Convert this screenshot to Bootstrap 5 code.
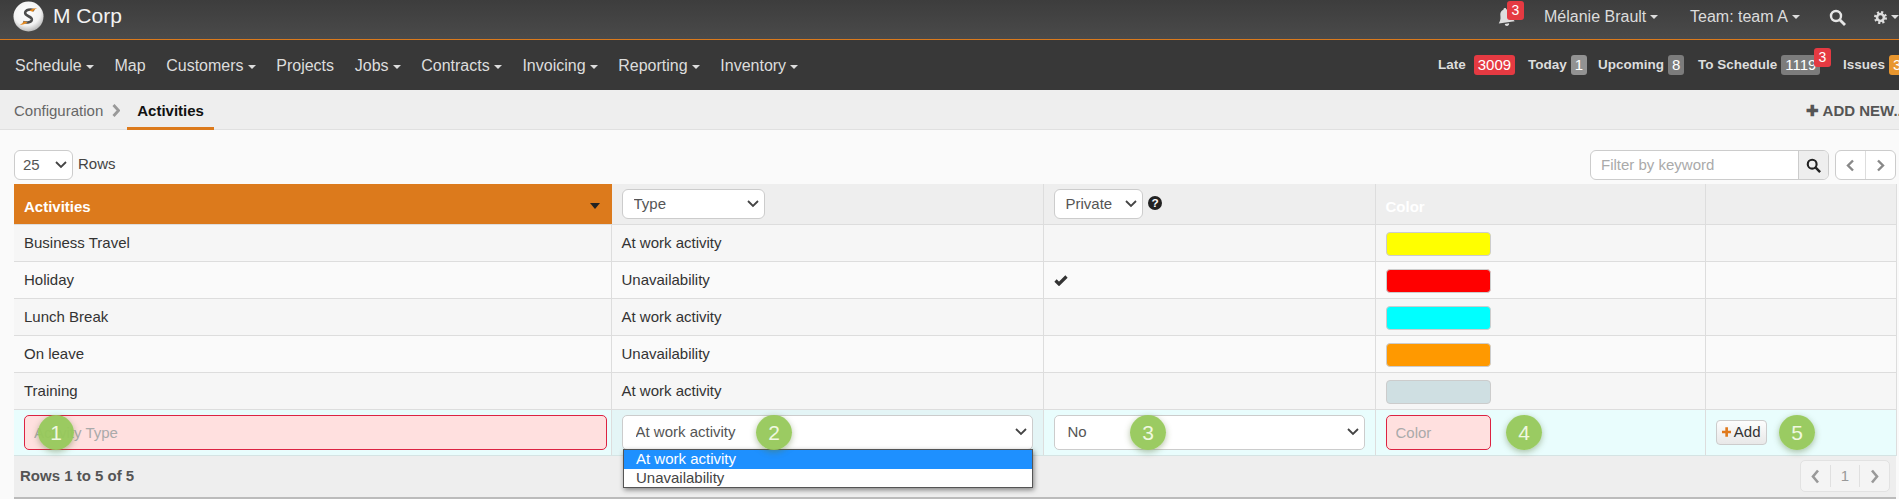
<!DOCTYPE html>
<html lang="en">
<head>
<meta charset="utf-8">
<title>Activities</title>
<link href="https://cdn.jsdelivr.net/npm/bootstrap@5.3.0/dist/css/bootstrap.min.css" rel="stylesheet">
<style>
html,body{height:499px;overflow:hidden}
body{font-family:"Liberation Sans",Arial,sans-serif;font-size:15px;color:#333;background:#fafafa;position:relative}
.top-bar{height:40px;background:linear-gradient(#3d3d3d,#4a4a4a);border-bottom:1px solid #dc7a1c;color:#ddd;white-space:nowrap;overflow:hidden}
.brand{font-size:21px;color:#f2f2f2;margin-left:13px;gap:9px;align-self:flex-start}
.logo{width:31px;height:31px;flex:none;margin-top:1px}
.top-right{margin-left:auto;align-self:stretch;flex:none}
.top-item{font-size:16px;color:#dcdcdc;flex:none;display:flex;align-items:center;padding-bottom:6px;position:relative}
.w-bell{width:47px}.w-user{width:146px}.w-team{width:139px}.w-search{width:45px;padding-bottom:4px}.w-gear{width:25px;padding-bottom:5px}
.bell-i{transform:rotate(-8deg)}
.bell-tip{left:10px;top:1px}
.caret-d{display:inline-block;width:0;height:0;border-left:4px solid transparent;border-right:4px solid transparent;border-top:4px solid currentColor;vertical-align:middle;margin-left:4px}
.main-bar{height:50px;background:#383838;color:#ddd;white-space:nowrap;overflow:hidden;padding-left:15px}
.menu{gap:20.7px;font-size:16px;padding-top:2px}
.stats{margin-left:auto;font-size:13.5px;font-weight:700;color:#ddd;align-self:stretch;flex:none}
.stat{display:flex;align-items:center;gap:4px;flex:none;position:relative}
.w-late{width:90px}.w-today{width:70px}.w-upcoming{width:100px}.w-sched{width:145px}.w-issues{width:56px}
.count{display:inline-block;height:20px;line-height:20px;padding:0 4px;font-size:15px;font-weight:400;border-radius:3px;color:#fff;background:#7c7c7c;text-align:center;flex:none}
.count-red{background:#e53a42}
.count-light{background:#929292}
.count-orange{background:#e8962e}
.tip{position:absolute;width:17px;height:19px;line-height:19px;background:#e53a42;color:#fff;border-radius:3px;font-size:14px;font-weight:400;text-align:center}
.sched-tip{left:116px;top:8px}
.crumb-bar{height:40px;background:#eee;border-bottom:1px solid #e0e0e0;position:relative;padding-left:14px;color:#666;font-size:15px}
.crumb-txt{padding-top:4px}
.crumb-chev{margin-left:9px;margin-top:2px}
.crumb-on{margin-left:7px;height:40px;border-bottom:3px solid #dc7a1c;padding:6px 10px 0;color:#111;font-weight:700;display:flex;align-items:center;width:87px;flex:none}
.add-new{margin-left:auto;font-size:15px;font-weight:700;color:#555;white-space:nowrap;width:93px;overflow:hidden;flex:none;padding-top:3px}
.tools{height:54px;padding:20px 3px 0 14px}
.ctl{height:30px;border:1px solid #ccc;border-radius:6px;background:#fff}
.sel{appearance:none;-webkit-appearance:none;color:#555;font-size:15px;padding:0 11px;height:30px;border:1px solid #ccc;border-radius:6px;background:#fff url("data:image/svg+xml,%3Csvg xmlns='http://www.w3.org/2000/svg' width='12' height='8'%3E%3Cpath d='M1 1l5 5 5-5' fill='none' stroke='%23444' stroke-width='1.800'/%3E%3C/svg%3E") no-repeat right 5px center;font-family:inherit}
.sel-25{width:59px;padding-left:8px}
.rows-label{margin-left:5px;margin-top:3px;color:#444}
.filter{width:239px;overflow:hidden;margin-left:auto}
.filter-txt{flex:1;padding-left:10px;color:#aaa;line-height:28px}
.filter-btn{width:30px;background:#eee;border-left:1px solid #ccc}
.pager{width:61px;margin-left:6px;overflow:hidden}
.pager>span{flex:1;text-align:center;line-height:26px}
.pager>span+span{border-left:1px solid #ddd}
.data{margin:0 3px 0 14px;width:1882px;table-layout:fixed;border-collapse:collapse}
.data col:nth-child(1){width:597px}.data col:nth-child(2){width:432px}.data col:nth-child(3){width:332px}.data col:nth-child(4){width:330px}.data col:nth-child(5){width:191px}
.data th,.data td{padding:0 10px;border:1px solid #ddd;border-top:0;border-left:0;vertical-align:middle}
.data td:first-child{padding-left:10px;border-left:0}
.data tr:nth-child(odd)>td{background:#f6f6f6}
.data tr:nth-child(even)>td{background:#fafafa}
.data thead th{height:40px;background:#eee;border-bottom:1px solid #ddd}
.data thead th.on{background:#dc7a1c;color:#fff;font-weight:700;position:relative;border-color:#dc7a1c;border-bottom-color:#ddd;padding-top:6px}
.data thead th.ghost{color:#fff;font-weight:700;border-left:1px solid #fff;padding-top:6px}
.data tbody td{height:37px;border-bottom:1px solid #ddd;padding-top:1px}
.data tbody tr.add-row>td{height:46px;background:#e9fdfd;border-bottom:1px solid #d5e4e4;padding-top:0}
.data tbody tr.add-row>td:nth-child(1){padding-right:4px}
.data tbody tr.add-row>td:nth-child(2){background:#e4f5f6}
.sort-arrow{position:absolute;right:11px;top:19px;width:0;height:0;border-left:5px solid transparent;border-right:5px solid transparent;border-top:6px solid #222}
.sel-head{display:block}
.sel-type{width:143px}.sel-private{width:89px}
.help-i{margin-top:7px;margin-left:5px}
.swatch{display:block;width:105px;height:24px;border:1px solid #ccc;border-radius:4px;margin-top:2px}
.swatch-y{background:#ff0}.swatch-r{background:#f00}.swatch-c{background:#0ff}.swatch-o{background:#f90}.swatch-g{background:#cfdfe2}
.field{height:35px;border-radius:5px;padding:0 9px;display:block;width:100%;font-size:15px;font-family:inherit;border:1px solid #ccc}
.field-bad{background:#ffe0df;border-color:#dc2342;outline:0}
.field-bad::placeholder{color:#aaa;opacity:1}
.field-color{width:105px}
.field.sel{height:35px;padding-left:13px;background-color:#fff}
.add-btn{display:inline-flex;align-items:center;gap:3px;height:25px;width:51px;padding:0 5px;font-size:15px;border:1px solid #ccc;border-radius:4px;background:linear-gradient(#fdfdfd,#e8e8e8);color:#333}
.foot{margin:0 3px 0 14px;height:43px;background:#eee;border-bottom:2px solid #bbb;padding:0 6px;font-weight:700;color:#555}
.foot-pager{width:90px;height:32px;border:1px solid #e2e2e2;border-radius:5px;background:#f4f4f4;color:#999;font-weight:400}
.foot-pager>span{flex:1;text-align:center}
.foot-pager>span+span{border-left:1px solid #e0e0e0}
.choices{position:absolute;left:623px;top:449px;width:410px;height:39px;background:#fff;border:1px solid #555;box-shadow:1px 2px 5px rgba(0,0,0,.45);z-index:5;line-height:18px;color:#444}
.choice{height:19px;padding-left:12px}
.choice-on{background:#1e90ff;color:#fff}
.step{position:absolute;top:415px;width:36px;height:35px;border-radius:50%;background:rgba(150,200,90,.95);color:#f0f8e0;font-size:21px;line-height:35px;text-align:center;box-shadow:0 2px 6px rgba(90,120,60,.45);z-index:6}
.step-1{left:38px}.step-2{left:756px}.step-3{left:1130px}.step-4{left:1506px}.step-5{left:1779px}
</style>
</head>
<body>
<header class="top-bar d-flex align-items-center position-relative">
  <div class="brand d-flex align-items-center">
    <svg class="logo" viewBox="0 0 32 32"><defs><radialGradient id="lg" cx=".45" cy=".35" r=".75"><stop offset="0" stop-color="#fff"/><stop offset=".6" stop-color="#f2f2f2"/><stop offset="1" stop-color="#9a9a9a"/></radialGradient></defs><circle cx="16" cy="16" r="15.500" fill="url(#lg)"/><path d="M22 9.500c-4-1.500-9-.5-9.500 2.500-.5 4 7.500 3.500 7 7.500-.4 2.500-5 3.500-9 2" fill="none" stroke="#4d4d4d" stroke-width="2.600"/><path d="M17 10c2-2 5-3 8-2.500-2 .5-3.500 2-4.500 3.500zM15 22c-2 2-5 3-8 2.500 2-.5 3.500-2 4.500-3.500z" fill="#e68a1f"/></svg>
    <span>M Corp</span>
  </div>
  <div class="top-right d-flex">
    <div class="top-item w-bell">
      <svg class="bell-i" width="18" height="20" viewBox="0 0 20 22"><path d="M10 1c1 0 1.500.7 1.500 1.500C15 3.500 16 6 16 9c0 4 1.500 6 3 8H1c1.500-2 3-4 3-8 0-3 1-5.500 4.500-6.500C8.500 1.700 9 1 10 1zM7.500 18.500h5a2.500 2.500 0 0 1-5 0z" fill="#ddd"/></svg>
      <span class="tip bell-tip">3</span>
    </div>
    <div class="top-item w-user"><span>Mélanie Brault<i class="caret-d"></i></span></div>
    <div class="top-item w-team"><span>Team: team A<i class="caret-d"></i></span></div>
    <div class="top-item w-search"><svg width="17" height="17" viewBox="0 0 17 17"><circle cx="7" cy="7" r="5" fill="none" stroke="#e6e6e6" stroke-width="2.400"/><path d="M11 11l5 5" stroke="#e6e6e6" stroke-width="2.800"/></svg></div>
    <div class="top-item w-gear"><svg width="15" height="15" viewBox="0 0 15 15"><circle cx="7.500" cy="7.500" r="4" fill="none" stroke="#ddd" stroke-width="3"/><circle cx="7.500" cy="7.500" r="6" fill="none" stroke="#ddd" stroke-width="3" stroke-dasharray="2.400 2.312"/></svg><i class="caret-d"></i></div>
  </div>
</header>

<nav class="main-bar d-flex align-items-center position-relative">
  <div class="menu d-flex">
    <span>Schedule<i class="caret-d"></i></span><span>Map</span><span>Customers<i class="caret-d"></i></span><span>Projects</span><span>Jobs<i class="caret-d"></i></span><span>Contracts<i class="caret-d"></i></span><span>Invoicing<i class="caret-d"></i></span><span>Reporting<i class="caret-d"></i></span><span>Inventory<i class="caret-d"></i></span>
  </div>
  <div class="stats d-flex">
    <span class="stat w-late">Late <span class="count count-red ms-1">3009</span></span>
    <span class="stat w-today">Today <span class="count count-light">1</span></span>
    <span class="stat w-upcoming">Upcoming <span class="count">8</span></span>
    <span class="stat w-sched">To Schedule <span class="count">1119</span><span class="tip sched-tip">3</span></span>
    <span class="stat w-issues">Issues <span class="count count-orange">3</span></span>
  </div>
</nav>

<div class="crumb-bar d-flex align-items-center">
  <span class="crumb-txt">Configuration</span>
  <svg class="crumb-chev" width="8" height="13" viewBox="0 0 8 13"><path d="M1.500 1l5 5.500-5 5.500" fill="none" stroke="#999" stroke-width="2.800"/></svg>
  <span class="crumb-on">Activities</span>
  <span class="add-new">✚ ADD NEW...</span>
</div>

<div class="tools d-flex align-items-start">
  <select class="sel sel-25"><option>25</option></select>
  <span class="rows-label">Rows</span>
  <div class="ctl filter d-flex">
    <span class="filter-txt">Filter by keyword</span>
    <span class="filter-btn d-flex align-items-center justify-content-center"><svg width="15" height="15" viewBox="0 0 17 17"><circle cx="7" cy="7" r="5" fill="none" stroke="#222" stroke-width="2.400"/><path d="M11 11l5 5" stroke="#222" stroke-width="2.800"/></svg></span>
  </div>
  <div class="ctl pager d-flex">
    <span><svg width="9" height="13" viewBox="0 0 9 13"><path d="M7 1.500L2 6.500l5 5" fill="none" stroke="#888" stroke-width="2.400"/></svg></span>
    <span><svg width="9" height="13" viewBox="0 0 9 13"><path d="M2 1.500L7 6.500l-5 5" fill="none" stroke="#888" stroke-width="2.400"/></svg></span>
  </div>
</div>

<table class="data">
  <colgroup><col><col><col><col><col></colgroup>
  <thead><tr>
    <th class="on">Activities<i class="sort-arrow"></i></th>
    <th><select class="sel sel-head sel-type"><option>Type</option></select></th>
    <th><div class="d-flex align-items-start"><select class="sel sel-head sel-private"><option>Private</option></select><svg class="help-i" width="14" height="14" viewBox="0 0 13 13"><circle cx="6.500" cy="6.500" r="6.500" fill="#222"/><text x="6.500" y="10.500" text-anchor="middle" font-size="11" font-weight="700" fill="#fff" font-family="Liberation Sans">?</text></svg></div></th>
    <th class="ghost">Color</th>
    <th class="ghost"></th>
  </tr></thead>
  <tbody>
    <tr><td>Business Travel</td><td>At work activity</td><td></td><td><span class="swatch swatch-y"></span></td><td></td></tr>
    <tr><td>Holiday</td><td>Unavailability</td><td><svg width="14" height="11" viewBox="0 0 14 11"><path d="M1.500 5.500l3.500 3.500 7.500-7.500" fill="none" stroke="#333" stroke-width="3.200"/></svg></td><td><span class="swatch swatch-r"></span></td><td></td></tr>
    <tr><td>Lunch Break</td><td>At work activity</td><td></td><td><span class="swatch swatch-c"></span></td><td></td></tr>
    <tr><td>On leave</td><td>Unavailability</td><td></td><td><span class="swatch swatch-o"></span></td><td></td></tr>
    <tr><td>Training</td><td>At work activity</td><td></td><td><span class="swatch swatch-g"></span></td><td></td></tr>
    <tr class="add-row">
      <td><input class="field field-bad" placeholder="Activity Type"></td>
      <td><select class="field sel"><option>At work activity</option></select></td>
      <td><select class="field sel"><option>No</option></select></td>
      <td><input class="field field-bad field-color" placeholder="Color"></td>
      <td><span class="add-btn"><svg width="12" height="12" viewBox="0 0 12 12"><path d="M6 0v12M0 6h12" stroke="#e0791c" stroke-width="3.400"/></svg>Add</span></td>
    </tr>
  </tbody>
</table>

<div class="foot d-flex align-items-center justify-content-between">
  <span>Rows 1 to 5 of 5</span>
  <div class="foot-pager d-flex align-items-center">
    <span><svg width="9" height="15" viewBox="0 0 9 15"><path d="M7 1.500L2 7.500l5 6" fill="none" stroke="#999" stroke-width="2.600"/></svg></span>
    <span>1</span>
    <span><svg width="9" height="15" viewBox="0 0 9 15"><path d="M2 1.500L7 7.500l-5 6" fill="none" stroke="#999" stroke-width="2.600"/></svg></span>
  </div>
</div>

<div class="choices">
  <div class="choice choice-on">At work activity</div>
  <div class="choice">Unavailability</div>
</div>
<span class="step step-1">1</span>
<span class="step step-2">2</span>
<span class="step step-3">3</span>
<span class="step step-4">4</span>
<span class="step step-5">5</span>
<script src="https://cdn.jsdelivr.net/npm/bootstrap@5.3.0/dist/js/bootstrap.bundle.min.js"></script>
</body>
</html>
